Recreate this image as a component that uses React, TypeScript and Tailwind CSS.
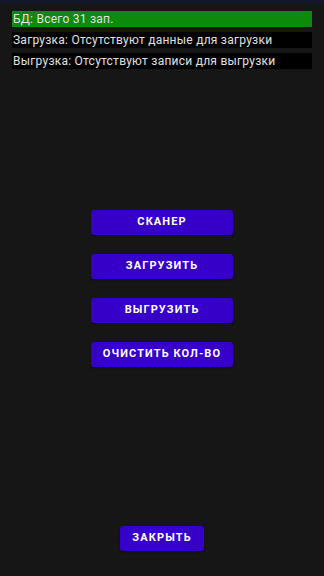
const actions = ['СКАНЕР', 'ЗАГРУЗИТЬ', 'ВЫГРУЗИТЬ', 'ОЧИСТИТЬ КОЛ-ВО']

function StatusRow({ text, green }: { text: string; green?: boolean }) {
  return (
    <div
      className={`h-4 px-px text-[12px] tracking-[0.02em] leading-4 whitespace-nowrap overflow-hidden text-[#e0e0e0] ${
        green ? 'bg-[#0b8a0b]' : 'bg-black'
      }`}
    >
      {text}
    </div>
  )
}

function ActionButton({ label, className }: { label: string; className?: string }) {
  return (
    <button
      className={`h-[25px] rounded-[3px] bg-[#3600c9] text-white text-[11px] font-bold tracking-[0.1em] shadow-[0_1px_2px_rgba(0,0,0,0.5)] ${className ?? ''}`}
    >
      {label}
    </button>
  )
}

export default function App() {
  return (
    <div
      className="w-[324px] h-[576px] bg-[#161616] flex flex-col"
      style={{ fontFamily: 'Roboto, "Noto Sans", sans-serif' }}
    >
      <div className="h-[3px] bg-[#12172a]" />
      <div className="mt-2 mx-3 flex flex-col gap-[5px]">
        <StatusRow text="БД: Всего 31 зап." green />
        <StatusRow text="Загрузка: Отсутствуют данные для загрузки" />
        <StatusRow text="Выгрузка: Отсутствуют записи для выгрузки" />
      </div>
      <div className="mt-[141px] flex flex-col items-center gap-[19px]">
        {actions.map((a) => (
          <ActionButton key={a} label={a} className="w-[142px]" />
        ))}
      </div>
      <div className="mt-auto mb-[25px] flex justify-center">
        <ActionButton label="ЗАКРЫТЬ" className="w-[84px]" />
      </div>
    </div>
  )
}
